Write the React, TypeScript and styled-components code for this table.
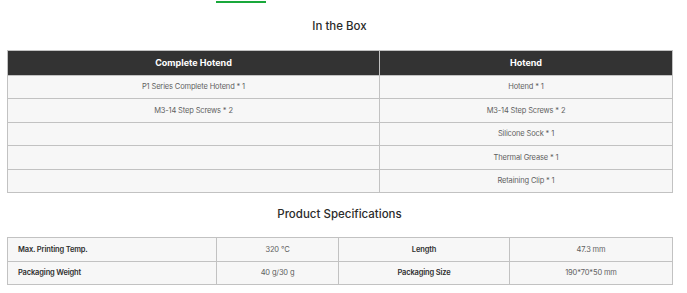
import * as React from "react";
import styled, { createGlobalStyle } from "styled-components";

const GlobalStyle = createGlobalStyle`
  body {
    margin: 0;
    background: #ffffff;
    font-family: "Inter", "Liberation Sans", sans-serif;
  }
`;

const Page = styled.div`
  padding: 0 15px 0 7px;
`;

const TopLink = styled.div`
  margin: 1px 0 0 209px;
  width: 50px;
  height: 2px;
  background: #19a83b;
`;

const Title = styled.h2<{ $top: number }>`
  margin: ${(p) => p.$top}px 0 0;
  text-align: center;
  font-size: 11.5px;
  line-height: 18px;
  font-weight: 500;
  color: #2b2b2b;
`;

const Table = styled.table<{ $top: number }>`
  margin-top: ${(p) => p.$top}px;
  width: 665px;
  border-collapse: collapse;
  table-layout: fixed;
  background: #f7f7f7;
`;

const HeadCell = styled.th`
  height: 23.5px;
  padding: 0;
  background: #333333;
  color: #ffffff;
  font-size: 9px;
  font-weight: 700;
  text-align: center;
  border: 1px solid #c2c2c2;
`;

const Cell = styled.td<{ $label?: boolean; $left?: boolean }>`
  height: 22.5px;
  padding: 0 0 0 ${(p) => (p.$left ? "10px" : "0")};
  font-size: 7.5px;
  letter-spacing: -0.15px;
  text-align: ${(p) => (p.$left ? "left" : "center")};
  color: ${(p) => (p.$label ? "#2e2e2e" : "#5f5f5f")};
  font-weight: ${(p) => (p.$label ? 600 : 400)};
  border: 1px solid #c2c2c2;
`;

const boxRows: [string, string][] = [
  ["P1 Series Complete Hotend * 1", "Hotend * 1"],
  ["M3-14 Step Screws * 2", "M3-14 Step Screws * 2"],
  ["", "Silicone Sock * 1"],
  ["", "Thermal Grease * 1"],
  ["", "Retaining Clip * 1"],
];

const specRows: [string, string, string, string][] = [
  ["Max. Printing Temp.", "320 ℃", "Length", "47.3 mm"],
  ["Packaging Weight", "40 g/30 g", "Packaging Size", "190*70*50 mm"],
];

export default function App() {
  return (
    <>
      <GlobalStyle />
      <Page>
        <TopLink />
        <Title $top={14}>In the Box</Title>
        <Table $top={15}>
          <colgroup>
            <col style={{ width: 372 }} />
            <col style={{ width: 293 }} />
          </colgroup>
          <thead>
            <tr>
              <HeadCell>Complete Hotend</HeadCell>
              <HeadCell>Hotend</HeadCell>
            </tr>
          </thead>
          <tbody>
            {boxRows.map(([a, b], i) => (
              <tr key={i}>
                <Cell>{a}</Cell>
                <Cell>{b}</Cell>
              </tr>
            ))}
          </tbody>
        </Table>
        <Title $top={12}>Product Specifications</Title>
        <Table $top={14}>
          <colgroup>
            <col style={{ width: 209 }} />
            <col style={{ width: 122 }} />
            <col style={{ width: 171 }} />
            <col style={{ width: 163 }} />
          </colgroup>
          <tbody>
            {specRows.map(([l1, v1, l2, v2], i) => (
              <tr key={i}>
                <Cell $label $left>
                  {l1}
                </Cell>
                <Cell>{v1}</Cell>
                <Cell $label>{l2}</Cell>
                <Cell>{v2}</Cell>
              </tr>
            ))}
          </tbody>
        </Table>
      </Page>
    </>
  );
}
